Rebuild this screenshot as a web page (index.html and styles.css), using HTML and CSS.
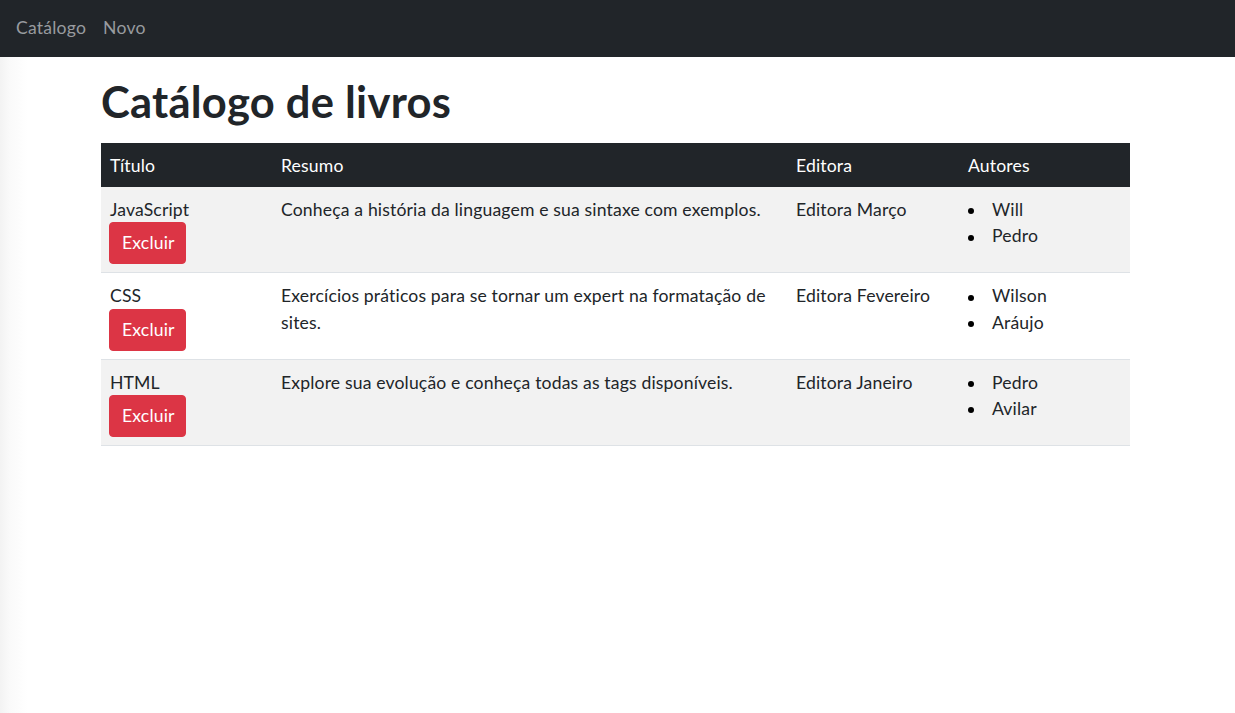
FILE: index.html
```html
<!DOCTYPE html>
<html lang="pt-BR">
<head>
<meta charset="utf-8">
<title>Catálogo de livros</title>
<link rel="stylesheet" href="styles.css">
</head>
<body>
<nav class="navbar">
  <a class="nav-link" href="#">Catálogo</a>
  <a class="nav-link" href="#">Novo</a>
</nav>
<main class="container">
  <h1 class="title">Catálogo de livros</h1>
  <table class="table">
    <colgroup>
      <col class="c1"><col class="c2"><col class="c3"><col class="c4">
    </colgroup>
    <thead>
      <tr><th>Título</th><th>Resumo</th><th>Editora</th><th>Autores</th></tr>
    </thead>
    <tbody>
      <tr class="odd">
        <td><div>JavaScript</div><button class="btn">Excluir</button></td>
        <td>Conheça a história da linguagem e sua sintaxe com exemplos.</td>
        <td>Editora Março</td>
        <td><ul class="authors"><li>Will</li><li>Pedro</li></ul></td>
      </tr>
      <tr>
        <td><div>CSS</div><button class="btn">Excluir</button></td>
        <td>Exercícios práticos para se tornar um expert na formatação de sites.</td>
        <td>Editora Fevereiro</td>
        <td><ul class="authors"><li>Wilson</li><li>Aráujo</li></ul></td>
      </tr>
      <tr class="odd">
        <td><div>HTML</div><button class="btn">Excluir</button></td>
        <td>Explore sua evolução e conheça todas as tags disponíveis.</td>
        <td>Editora Janeiro</td>
        <td><ul class="authors"><li>Pedro</li><li>Avilar</li></ul></td>
      </tr>
    </tbody>
  </table>
</main>
</body>
</html>
```
FILE: styles.css
```css
html, body {
  margin: 0;
  padding: 0;
}
body {
  font-family: "Lato", "Open Sans", sans-serif;
  font-size: 17.6px;
  line-height: 26.4px;
  letter-spacing: 0.15px;
  color: #212529;
  background: linear-gradient(to right, #f3f3f3 0, #fafafa 10px, #ffffff 28px);
  min-height: 713px;
}
.navbar {
  height: 57px;
  background: #212529;
  display: flex;
  align-items: center;
  gap: 17px;
  padding-left: 16px;
  box-sizing: border-box;
}
.nav-link {
  color: #989b9f;
  text-decoration: none;
  letter-spacing: 0.2px;
}
.container {
  width: 1029px;
  margin-left: 101px;
}
.title {
  font-size: 43.5px;
  font-weight: 700;
  line-height: 52px;
  letter-spacing: 0.25px;
  margin: 18px 0 16px;
  color: #212529;
}
.table {
  width: 1029px;
  table-layout: fixed;
  border-collapse: separate;
  border-spacing: 0;
}
.c1 { width: 171px; }
.c2 { width: 515px; }
.c3 { width: 172px; }
.c4 { width: 171px; }
.table th {
  background: #212529;
  color: #ffffff;
  font-weight: 400;
  text-align: left;
  padding: 10px 9px 8px;
  line-height: 26px;
  height: 26px;
}
.table td {
  vertical-align: top;
  text-align: left;
  padding: 10px 9px 8px;
  border-bottom: 1px solid #dee2e6;
  color: #212529;
}
.table tr.odd td {
  background: #f2f2f2;
}
.btn {
  display: block;
  font: inherit;
  letter-spacing: inherit;
  height: 42px;
  line-height: 40px;
  padding: 0 10px 0 12px;
  border: 1px solid #dc3545;
  border-radius: 4px;
  background: #dc3545;
  color: #ffffff;
  margin-left: -1px;
  margin-top: -1px;
}
.authors {
  list-style: none;
  margin: 0;
  padding: 0;
}
.authors li {
  display: flex;
  align-items: center;
}
.authors li::before {
  content: "";
  width: 6px;
  height: 6px;
  border-radius: 50%;
  background: #000000;
  margin-right: 18px;
  flex: none;
  position: relative;
  top: 1px;
}
```
